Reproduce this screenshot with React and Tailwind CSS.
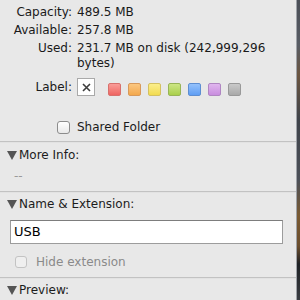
import React from "react";

const font = { fontFamily: '"DejaVu Sans", "Liberation Sans", sans-serif' };

const swatches = [
  "from-[#f99c98] to-[#ee6461] border-[#d8706c]",
  "from-[#fbc780] to-[#f3a84c] border-[#d8995a]",
  "from-[#fbee8a] to-[#f2db4e] border-[#d4c160]",
  "from-[#cde684] to-[#a9cf4a] border-[#98b456]",
  "from-[#94c1fb] to-[#5f9ef4] border-[#5d8ed2]",
  "from-[#e0b6ee] to-[#c98ddf] border-[#b086c2]",
  "from-[#c9c9c9] to-[#a9a9a9] border-[#999999]",
];

function Triangle() {
  return (
    <svg width="10" height="9" viewBox="0 0 10 9" className="shrink-0">
      <path d="M0 0 L10 0 L5 9 Z" fill="#555" />
    </svg>
  );
}

function Header({ children }) {
  return (
    <div className="flex items-center h-[15px] pl-[7px] gap-[2px] text-[12px] leading-[15px] text-[#1c1c1c]">
      <Triangle />
      <span>{children}</span>
    </div>
  );
}

function Separator() {
  return (
    <div>
      <div className="h-px bg-[#c2c2c2]" />
      <div className="h-px bg-[#e2e2e2]" />
    </div>
  );
}

export default function App() {
  return (
    <div className="flex w-[300px] h-[300px] overflow-hidden bg-[#e8e8e8]" style={font}>
      <div className="w-[296px] shrink-0 flex flex-col">
        {/* Volume info */}
        <div className="h-[141px] pt-[5px] text-[12px] leading-[15px] text-[#1a1a1a]">
          <div className="grid grid-cols-[72px_1fr] gap-x-[5px] gap-y-[3px] pr-[10px]">
            <span className="text-right">Capacity:</span>
            <span>489.5 MB</span>
            <span className="text-right">Available:</span>
            <span>257.8 MB</span>
            <span className="text-right">Used:</span>
            <span>231.7 MB on disk (242,999,296 bytes)</span>
          </div>

          {/* Label row */}
          <div className="grid grid-cols-[72px_1fr] gap-x-[5px] mt-[7px] h-[18px] items-center">
            <span className="text-right">Label:</span>
            <div className="flex items-center">
              <div className="w-[18px] h-[18px] bg-white border border-[#a9a9a9] flex items-center justify-center">
                <svg width="9" height="9" viewBox="0 0 9 9">
                  <path d="M1 1 L8 8 M8 1 L1 8" stroke="#3d3d3d" strokeWidth="1.6" />
                </svg>
              </div>
              <div className="flex gap-[7px] ml-[13px] mt-[4px]">
                {swatches.map((c, i) => (
                  <div
                    key={i}
                    className={`w-[13px] h-[13px] rounded-[2px] border bg-linear-to-b ${c}`}
                  />
                ))}
              </div>
            </div>
          </div>

          {/* Shared Folder */}
          <div className="flex items-center mt-[24px] h-[14px] pl-[57px] gap-[7px]">
            <div className="w-[13px] h-[13px] rounded-[3px] border border-[#8c8c8c] bg-linear-to-b from-white to-[#e9e9e9]" />
            <span>Shared Folder</span>
          </div>
        </div>

        <Separator />

        {/* More Info */}
        <div className="h-[48px] pt-[5px]">
          <Header>More Info:</Header>
          <div className="mt-[6px] pl-[14px] text-[12px] leading-[15px] text-[#9a9a9a]">--</div>
        </div>

        <Separator />

        {/* Name & Extension */}
        <div className="h-[84px] pt-[4px]">
          <Header>Name &amp; Extension:</Header>
          <div className="mt-[8px] ml-[10px] w-[273px] h-[24px] bg-white border border-[#9c9c9c] border-t-[#7d7d7d] flex items-center pl-[3px] text-[13px] text-black">
            USB
          </div>
          <div className="flex items-center mt-[11px] h-[13px] pl-[15px] gap-[9px] text-[12px] text-[#8a8a8a]">
            <div className="w-[12px] h-[12px] rounded-[3px] border border-[#c3c3c3] bg-[#efefef]" />
            <span>Hide extension</span>
          </div>
        </div>

        <Separator />

        {/* Preview */}
        <div className="pt-[4px]">
          <Header>Preview:</Header>
        </div>
      </div>

      {/* Window edge */}
      <div className="w-px bg-[#9ea2a8]" />
      <div className="flex-1 bg-[linear-gradient(to_bottom,#4b4f57_0%,#585c64_15%,#6b5540_25%,#3f434a_40%,#4c5058_60%,#7a5a32_72%,#6b4e2e_82%,#1f2125_88%,#3a3d42_100%)]" />
    </div>
  );
}
